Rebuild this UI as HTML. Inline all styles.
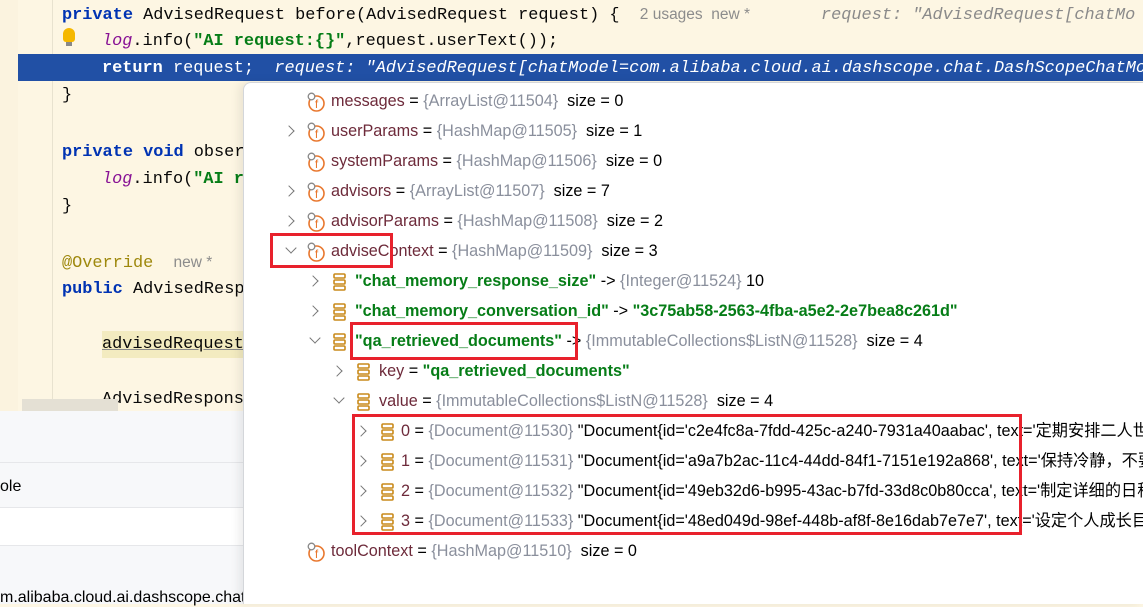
<!DOCTYPE html>
<html><head><meta charset="utf-8"><style>
*{margin:0;padding:0;box-sizing:border-box}
body{width:1143px;height:604px;overflow:hidden;position:relative;background:#fdf6e3;font-family:"Liberation Sans","Noto Sans CJK SC",sans-serif}
.code{position:absolute;font-family:"Liberation Mono",monospace;font-size:16.9px;white-space:pre;color:#080808;line-height:27px;height:27px}
.kw{color:#0033b3;font-weight:bold}
.lg{color:#871094;font-style:italic}
.st{color:#067d17;font-weight:bold}
.gr{color:#8c8c8c;font-family:"Liberation Sans",sans-serif;font-size:15.5px}
.hint{color:#8a8a8a;font-style:italic}
#hl{position:absolute;left:18px;top:54px;width:1125px;height:27px;background:#2150a5}
#pop{position:absolute;left:243px;top:82px;width:900px;height:522px;background:#fff;border-left:1px solid #d4d6da;border-top:1px solid #d4d6da;border-top-left-radius:8px;box-shadow:-4px 0 10px rgba(0,0,0,.08)}
.row{position:absolute;height:30px;line-height:30px;font-size:16.2px;white-space:nowrap;color:#000}
.nm{color:#6d2a3a}
.ref{color:#8a8f9c}
.s{color:#067d17;font-weight:bold}
.arr{position:absolute;top:11px;width:8px;height:8px;border-right:1.5px solid #777;border-bottom:1.5px solid #777}
.r{transform:rotate(-45deg)}
.d{transform:rotate(45deg);top:8px}
.fi{position:absolute;top:6px;width:20px;height:20px}
.box{position:absolute;border:3px solid #e8212c}
</style></head><body>
<div style="position:absolute;left:0;top:0;width:18px;height:604px;background:#fbf3df"></div>
<div style="position:absolute;left:52px;top:0;width:1px;height:410px;background:#e8e2cf"></div>
<div id="hl"></div>
<div class="code" style="left:62px;top:1px"><span class="kw">private</span> AdvisedRequest before(AdvisedRequest request) {  <span class="gr">2 usages  new *</span>       <span class="hint">request: "AdvisedRequest[chatMo</span></div>
<div class="code" style="left:102px;top:28px"><span class="lg">log</span>.info(<span class="st">"AI request:{}"</span>,request.userText());</div>
<div style="position:absolute;left:63px;top:28px;width:12px;height:14px;background:#f5b800;border-radius:6px 6px 3px 3px"></div>
<div style="position:absolute;left:66px;top:42px;width:6px;height:4px;background:#888"></div>
<div class="code" style="left:102px;top:55px;color:#fff"><b>return</b> request;  <i>request: "AdvisedRequest[chatModel=com.alibaba.cloud.ai.dashscope.chat.DashScopeChatMod</i></div>
<div class="code" style="left:62px;top:82px">}</div>
<div class="code" style="left:62px;top:139px"><span class="kw">private void</span> obser</div>
<div class="code" style="left:102px;top:166px"><span class="lg">log</span>.info(<span class="st">"AI r</span></div>
<div class="code" style="left:62px;top:193px">}</div>
<div class="code" style="left:62px;top:249px;color:#9e880d">@Override  <span class="gr">new *</span></div>
<div class="code" style="left:62px;top:276px"><span class="kw">public</span> AdvisedResp</div>
<div class="code" style="left:102px;top:331px;background:#f3ebc0;text-decoration:underline;text-decoration-color:#888">advisedRequest</div>
<div class="code" style="left:102px;top:386px">AdvisedRespons</div>
<div style="position:absolute;left:22px;top:399px;width:96px;height:12px;background:#e4e0d4"></div>
<div style="position:absolute;left:0;top:411px;width:243px;height:193px;background:#f7f8fa"></div>
<div style="position:absolute;left:0;top:462px;width:243px;height:1px;background:#e6e7ea"></div>
<div style="position:absolute;left:0;top:507px;width:243px;height:1px;background:#e6e7ea"></div>
<div style="position:absolute;left:0;top:508px;width:243px;height:37px;background:#fff"></div>
<div style="position:absolute;left:0;top:545px;width:243px;height:1px;background:#e6e7ea"></div>
<div style="position:absolute;left:0;top:478px;font-size:16px">ole</div>
<div style="position:absolute;left:0;top:589px;font-size:16px;white-space:nowrap">m.alibaba.cloud.ai.dashscope.chat</div>
<div id="pop"></div>
<svg width="0" height="0" style="position:absolute"><defs>
<g id="f"><circle cx="10.5" cy="11.5" r="7.5" fill="#fff" stroke="#e8772e" stroke-width="1.6"/><text x="10.5" y="16" font-size="12" text-anchor="middle" fill="#e8772e" font-family="Liberation Sans">f</text><circle cx="5.5" cy="4.5" r="3.3" fill="#fff" stroke="#888" stroke-width="1.3"/></g>
<g id="s"><rect x="4" y="2" width="11" height="4" rx="1" fill="none" stroke="#c98a1b" stroke-width="1.6"/><rect x="4" y="8" width="11" height="4" rx="1" fill="none" stroke="#c98a1b" stroke-width="1.6"/><rect x="4" y="14" width="11" height="4" rx="1" fill="none" stroke="#c98a1b" stroke-width="1.6"/></g>
</defs></svg>
<div class="row" style="left:0;top:86px;width:1143px">
<svg class="fi" style="left:306px" viewBox="0 0 20 20"><use href="#f"/></svg><span style="position:absolute;left:331px"><span class="nm">messages</span> = <span class="ref">{ArrayList@11504}</span>&nbsp; size = 0</span></div>
<div class="row" style="left:0;top:116px;width:1143px"><i class="arr r" style="left:285px"></i>
<svg class="fi" style="left:306px" viewBox="0 0 20 20"><use href="#f"/></svg><span style="position:absolute;left:331px"><span class="nm">userParams</span> = <span class="ref">{HashMap@11505}</span>&nbsp; size = 1</span></div>
<div class="row" style="left:0;top:146px;width:1143px">
<svg class="fi" style="left:306px" viewBox="0 0 20 20"><use href="#f"/></svg><span style="position:absolute;left:331px"><span class="nm">systemParams</span> = <span class="ref">{HashMap@11506}</span>&nbsp; size = 0</span></div>
<div class="row" style="left:0;top:176px;width:1143px"><i class="arr r" style="left:285px"></i>
<svg class="fi" style="left:306px" viewBox="0 0 20 20"><use href="#f"/></svg><span style="position:absolute;left:331px"><span class="nm">advisors</span> = <span class="ref">{ArrayList@11507}</span>&nbsp; size = 7</span></div>
<div class="row" style="left:0;top:206px;width:1143px"><i class="arr r" style="left:285px"></i>
<svg class="fi" style="left:306px" viewBox="0 0 20 20"><use href="#f"/></svg><span style="position:absolute;left:331px"><span class="nm">advisorParams</span> = <span class="ref">{HashMap@11508}</span>&nbsp; size = 2</span></div>
<div class="row" style="left:0;top:236px;width:1143px"><i class="arr d" style="left:287px"></i>
<svg class="fi" style="left:306px" viewBox="0 0 20 20"><use href="#f"/></svg><span style="position:absolute;left:331px"><span class="nm">adviseContext</span> = <span class="ref">{HashMap@11509}</span>&nbsp; size = 3</span></div>
<div class="row" style="left:0;top:266px;width:1143px"><i class="arr r" style="left:309px"></i>
<svg class="fi" style="left:330px" viewBox="0 0 20 20"><use href="#s"/></svg><span style="position:absolute;left:355px"><span class="s">"chat_memory_response_size"</span> -&gt; <span class="ref">{Integer@11524}</span> 10</span></div>
<div class="row" style="left:0;top:296px;width:1143px"><i class="arr r" style="left:309px"></i>
<svg class="fi" style="left:330px" viewBox="0 0 20 20"><use href="#s"/></svg><span style="position:absolute;left:355px"><span class="s">"chat_memory_conversation_id"</span> -&gt; <span class="s">"3c75ab58-2563-4fba-a5e2-2e7bea8c261d"</span></span></div>
<div class="row" style="left:0;top:326px;width:1143px"><i class="arr d" style="left:311px"></i>
<svg class="fi" style="left:330px" viewBox="0 0 20 20"><use href="#s"/></svg><span style="position:absolute;left:355px"><span class="s">"qa_retrieved_documents"</span> -&gt; <span class="ref">{ImmutableCollections$ListN@11528}</span>&nbsp; size = 4</span></div>
<div class="row" style="left:0;top:356px;width:1143px"><i class="arr r" style="left:333px"></i>
<svg class="fi" style="left:354px" viewBox="0 0 20 20"><use href="#s"/></svg><span style="position:absolute;left:379px"><span class="nm">key</span> = <span class="s">"qa_retrieved_documents"</span></span></div>
<div class="row" style="left:0;top:386px;width:1143px"><i class="arr d" style="left:335px"></i>
<svg class="fi" style="left:354px" viewBox="0 0 20 20"><use href="#s"/></svg><span style="position:absolute;left:379px"><span class="nm">value</span> = <span class="ref">{ImmutableCollections$ListN@11528}</span>&nbsp; size = 4</span></div>
<div class="row" style="left:0;top:416px;width:1143px"><i class="arr r" style="left:357px"></i>
<svg class="fi" style="left:378px" viewBox="0 0 20 20"><use href="#s"/></svg><span style="position:absolute;left:401px"><span class="nm">0</span> = <span class="ref">{Document@11530}</span> "Document{id='c2e4fc8a-7fdd-425c-a240-7931a40aabac', text='定期安排二人世界</span></div>
<div class="row" style="left:0;top:446px;width:1143px"><i class="arr r" style="left:357px"></i>
<svg class="fi" style="left:378px" viewBox="0 0 20 20"><use href="#s"/></svg><span style="position:absolute;left:401px"><span class="nm">1</span> = <span class="ref">{Document@11531}</span> "Document{id='a9a7b2ac-11c4-44dd-84f1-7151e192a868', text='保持冷静，不要</span></div>
<div class="row" style="left:0;top:476px;width:1143px"><i class="arr r" style="left:357px"></i>
<svg class="fi" style="left:378px" viewBox="0 0 20 20"><use href="#s"/></svg><span style="position:absolute;left:401px"><span class="nm">2</span> = <span class="ref">{Document@11532}</span> "Document{id='49eb32d6-b995-43ac-b7fd-33d8c0b80cca', text='制定详细的日程</span></div>
<div class="row" style="left:0;top:506px;width:1143px"><i class="arr r" style="left:357px"></i>
<svg class="fi" style="left:378px" viewBox="0 0 20 20"><use href="#s"/></svg><span style="position:absolute;left:401px"><span class="nm">3</span> = <span class="ref">{Document@11533}</span> "Document{id='48ed049d-98ef-448b-af8f-8e16dab7e7e7', text='设定个人成长目标</span></div>
<div class="row" style="left:0;top:536px;width:1143px">
<svg class="fi" style="left:306px" viewBox="0 0 20 20"><use href="#f"/></svg><span style="position:absolute;left:331px"><span class="nm">toolContext</span> = <span class="ref">{HashMap@11510}</span>&nbsp; size = 0</span></div>
<div class="box" style="left:270px;top:233px;width:123px;height:35px"></div>
<div class="box" style="left:350px;top:322px;width:228px;height:38px"></div>
<div class="box" style="left:352px;top:414px;width:670px;height:121px"></div>
</body></html>
